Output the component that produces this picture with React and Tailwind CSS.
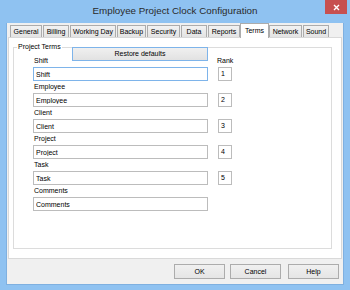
import React from "react";

const tabs = [
  { label: "General", w: "w-[32px] mr-[1px]" },
  { label: "Billing", w: "w-[26px] mr-[1px]" },
  { label: "Working Day", w: "w-[46px] mr-[1px]" },
  { label: "Backup", w: "w-[29px] mr-[1px]" },
  { label: "Security", w: "w-[33px] mr-[1px]" },
  { label: "Data", w: "w-[26px] mr-[1px]" },
  { label: "Reports", w: "w-[32px]" },
  { label: "Terms", w: "w-[29px]", active: true },
  { label: "Network", w: "w-[33px] mr-[1px]" },
  { label: "Sound", w: "w-[26px]" },
];

const terms = [
  { label: "Shift", value: "Shift", rank: "1", focused: true },
  { label: "Employee", value: "Employee", rank: "2" },
  { label: "Client", value: "Client", rank: "3" },
  { label: "Project", value: "Project", rank: "4" },
  { label: "Task", value: "Task", rank: "5" },
  { label: "Comments", value: "Comments" },
];

const App = () => {
  return (
    <div className="w-[350px] h-[290px] bg-[#8fc2f1] font-['Liberation_Sans',Arial,sans-serif] text-black leading-[9px] overflow-hidden">
      {/* title bar */}
      <div className="h-[22px] flex items-start">
        <div className="w-[25px]" />
        <div className="flex-1 h-[22px] flex items-center justify-center text-[9.8px] leading-[12px] text-[#2a2a2a]">
          Employee Project Clock Configuration
        </div>
        <button className="w-[22px] h-[14px] mr-[3px] bg-[#c75050] flex items-center justify-center">
          <svg width="7" height="7" viewBox="0 0 7 7">
            <path d="M1 1L6 6M6 1L1 6" stroke="#fff" strokeWidth="1.4" />
          </svg>
        </button>
      </div>

      {/* client area */}
      <div className="ml-[6px] w-[338px] h-[262px] bg-[#f0f0f0] border-l border-r border-b border-[#7fb0e0]">
        {/* tabs */}
        <div className="flex items-end h-[15px] mt-[1px] ml-[3px] -mb-[1px]">
          {tabs.map((t) =>
            t.active ? (
              <div
                key={t.label}
                className={`${t.w} h-[15px] relative z-10 bg-white border-t border-l border-r border-[#acacac] flex items-start justify-center pt-[2px] text-[7px] leading-[9px]`}
              >
                {t.label}
              </div>
            ) : (
              <div
                key={t.label}
                className={`${t.w} h-[12px] mb-[1px] bg-gradient-to-b from-[#f2f2f2] to-[#e3e3e3] border-t border-l border-r border-[#acacac] flex items-center justify-center text-[7px] leading-[9px] whitespace-nowrap`}
              >
                {t.label}
              </div>
            )
          )}
        </div>

        {/* tab page */}
        <div className="ml-[1px] w-[334px] h-[222px] bg-white border border-[#d9d9d9]">
          <fieldset className="ml-[4px] mt-[5px] w-[319px] h-[206px] border border-[#dcdcdc]">
            <legend className="ml-[3px] px-[1px] text-[7px] leading-[8px]">Project Terms</legend>
            <div className="pl-[19px]">
              <button className="-mt-[4px] ml-[39px] w-[136px] h-[14px] border border-[#7eb4ea] bg-gradient-to-b from-[#f0f0f0] to-[#e2e2e2] text-[7px] leading-[12px] flex items-center justify-center">
                Restore defaults
              </button>
              <div className="-mt-[5px]">
                {terms.map((row, i) => (
                  <div key={row.label} className="flex items-end mb-[1px]">
                    <div className="w-[175px]">
                      <div className="h-[10px] pl-[1px] text-[7px] leading-[10px]">{row.label}</div>
                      <input
                        readOnly
                        defaultValue={row.value}
                        className={`block mt-[1px] w-[175px] h-[14px] px-[2px] text-[7px] leading-[12px] bg-white outline-none border ${
                          row.focused ? "border-[#7eb4ea]" : "border-[#bcbcbc]"
                        }`}
                      />
                    </div>
                    {row.rank && (
                      <div className="ml-[10px] flex flex-col">
                        <div className="h-[10px] text-[7px] leading-[10px] -ml-[1px]">{i === 0 ? "Rank" : ""}</div>
                        <div className="mt-[1px] w-[14px] h-[14px] border border-[#bcbcbc] bg-white pl-[2px] text-[7px] leading-[12px]">
                          {row.rank}
                        </div>
                      </div>
                    )}
                  </div>
                ))}
              </div>
            </div>
          </fieldset>
        </div>

        {/* dialog buttons */}
        <div className="flex mt-[5px] ml-[167px]">
          <button className="w-[51px] h-[15px] border border-[#acacac] bg-gradient-to-b from-[#f0f0f0] to-[#e5e5e5] text-[7px] leading-[13px]">
            OK
          </button>
          <button className="ml-[5px] w-[51px] h-[15px] border border-[#acacac] bg-gradient-to-b from-[#f0f0f0] to-[#e5e5e5] text-[7px] leading-[13px]">
            Cancel
          </button>
          <button className="ml-[7px] w-[51px] h-[15px] border border-[#acacac] bg-gradient-to-b from-[#f0f0f0] to-[#e5e5e5] text-[7px] leading-[13px]">
            Help
          </button>
        </div>
      </div>
    </div>
  );
};

export default App;
